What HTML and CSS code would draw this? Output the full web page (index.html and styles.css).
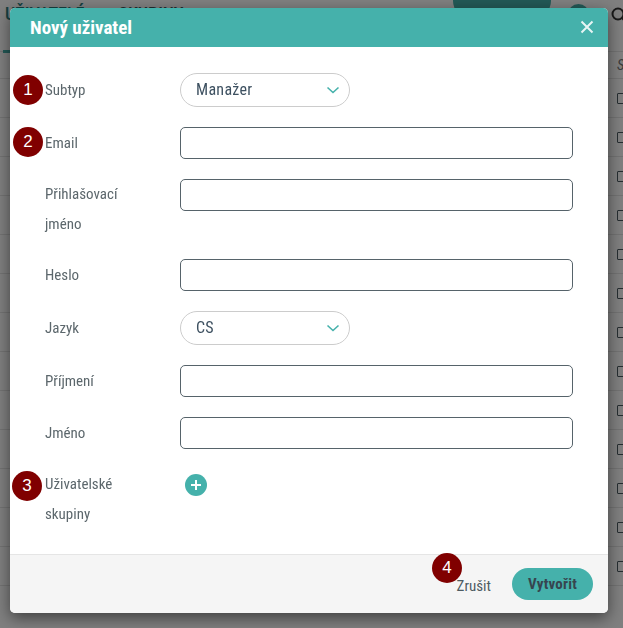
FILE: index.html
```html
<!DOCTYPE html>
<html lang="cs">
<head>
    <meta charset="UTF-8">
    <meta name="viewport" content="width=device-width, initial-scale=1.0">
    <title>Nový uživatel</title>
    <link rel="stylesheet" href="styles.css">
</head>
<body>
    <div class="page">
        <div class="topbar">
            <div class="tabs">
                <span class="tab active">UŽIVATELÉ</span>
                <span class="tab">SKUPINY</span>
            </div>
            <div class="top-actions">
                <span class="top-btn"></span>
                <span class="top-dot"></span>
                <svg class="top-search" width="16" height="16" viewBox="0 0 16 16"><circle cx="7" cy="7" r="5.5" fill="none" stroke="#333" stroke-width="2"/><path d="M11 11l4 4" stroke="#333" stroke-width="2"/></svg>
            </div>
        </div>
        <div class="table-head">S</div>
        <div class="table-row"><span class="check"></span></div>
        <div class="table-row"><span class="check"></span></div>
        <div class="table-row"><span class="check"></span></div>
        <div class="table-row"><span class="check"></span></div>
        <div class="table-row"><span class="check"></span></div>
        <div class="table-row"><span class="check"></span></div>
        <div class="table-row"><span class="check"></span></div>
        <div class="table-row"><span class="check"></span></div>
        <div class="table-row"><span class="check"></span></div>
        <div class="table-row"><span class="check"></span></div>
        <div class="table-row"><span class="check"></span></div>
        <div class="table-row"><span class="check"></span></div>
        <div class="table-row"><span class="check"></span></div>
    </div>

    <div class="backdrop"></div>

    <div class="modal">
        <div class="modal-header">
            <h2>Nový uživatel</h2>
            <svg class="close" width="14" height="14" viewBox="0 0 14 14"><path d="M1.5 1.5l11 11M12.5 1.5l-11 11" stroke="#e6f5f4" stroke-width="2"/></svg>
        </div>
        <div class="modal-body">
            <div class="form-row">
                <span class="badge badge-one">1</span>
                <label>Subtyp</label>
                <div class="select"><span>Manažer</span><svg width="14" height="8" viewBox="0 0 14 8"><path d="M1.5 1.5L7 6.5l5.5-5" fill="none" stroke="#45b1ab" stroke-width="1.6"/></svg></div>
            </div>
            <div class="form-row">
                <span class="badge badge-two">2</span>
                <label>Email</label>
                <input class="text-input" type="text">
            </div>
            <div class="form-row tall">
                <label>Přihlašovací jméno</label>
                <input class="text-input" type="text">
            </div>
            <div class="form-row">
                <label>Heslo</label>
                <input class="text-input" type="text">
            </div>
            <div class="form-row">
                <label>Jazyk</label>
                <div class="select"><span>CS</span><svg width="14" height="8" viewBox="0 0 14 8"><path d="M1.5 1.5L7 6.5l5.5-5" fill="none" stroke="#45b1ab" stroke-width="1.6"/></svg></div>
            </div>
            <div class="form-row">
                <label>Příjmení</label>
                <input class="text-input" type="text">
            </div>
            <div class="form-row">
                <label>Jméno</label>
                <input class="text-input" type="text">
            </div>
            <div class="form-row tall last">
                <span class="badge badge-three">3</span>
                <label>Uživatelské skupiny</label>
                <span class="add-btn"><svg width="12" height="12" viewBox="0 0 12 12"><path d="M6 1v10M1 6h10" stroke="#fff" stroke-width="2"/></svg></span>
            </div>
        </div>
        <div class="modal-footer">
            <span class="badge badge-four">4</span>
            <a class="cancel">Zrušit</a>
            <a class="create">Vytvořit</a>
        </div>
    </div>
</body>
</html>
```

FILE: styles.css
```css
* {
    margin: 0;
    padding: 0;
    box-sizing: border-box;
}
html, body {
    height: 100%;
    overflow: hidden;
}
body {
    font-family: 'Roboto', 'Liberation Sans', sans-serif;
    font-stretch: 75%;
    background-color: #fff;
    color: #4d5b62;
}
.topbar {
    display: flex;
    justify-content: space-between;
    height: 52px;
    border-bottom: 1px solid #e5e5e5;
}
.tabs {
    display: flex;
    gap: 30px;
    padding-left: 12px;
}
.tab {
    font-size: 18px;
    font-weight: 500;
    padding-top: 3px;
    color: #45595f;
}
.tab.active {
    color: #2f7f80;
    border-bottom: 3px solid #45b1ab;
    padding-right: 4px;
    padding-left: 2px;
    margin-left: -9px;
    height: 53px;
}
.top-actions {
    display: flex;
    align-items: flex-start;
}
.top-btn {
    width: 98px;
    height: 34px;
    margin-top: -16px;
    margin-right: 17px;
    border-radius: 17px;
    background-color: #45b1ab;
}
.top-dot {
    width: 21px;
    height: 21px;
    margin-top: 4px;
    margin-right: 22px;
    border-radius: 50%;
    background-color: #45b1ab;
}
.top-search {
    margin-top: 7px;
    margin-right: -4px;
}
.table-head {
    height: 27px;
    padding-left: 617px;
    padding-top: 4px;
    font-size: 15px;
    font-style: italic;
    color: #777;
    border-bottom: 1px solid #e5e5e5;
}
.table-row {
    height: 39px;
    padding-left: 617px;
    padding-top: 14px;
    border-bottom: 1px solid #e5e5e5;
}
.check {
    display: block;
    width: 11px;
    height: 11px;
    border: 1px solid #4d5b62;
    border-radius: 1px;
}
.backdrop {
    position: fixed;
    top: 0;
    left: 0;
    right: 0;
    bottom: 0;
    background-color: rgba(0, 0, 0, 0.5);
}
.modal {
    position: fixed;
    top: 8px;
    left: 10px;
    width: 598px;
    height: 605px;
    display: flex;
    flex-direction: column;
    background-color: #fff;
    border-radius: 5px;
    box-shadow: 0 5px 15px rgba(0, 0, 0, 0.5);
    overflow: hidden;
}
.modal-header {
    flex: 0 0 39px;
    display: flex;
    align-items: center;
    justify-content: space-between;
    padding: 0 14px 0 20px;
    background-color: #45b1ab;
}
.modal-header h2 {
    font-size: 19px;
    font-weight: 700;
    color: #fff;
}
.close {
    margin-top: -1px;
}
.modal-body {
    flex: 1;
    padding: 26px 35px 0 35px;
}
.form-row {
    position: relative;
    display: flex;
    align-items: center;
    margin-bottom: 20px;
}
.form-row.tall {
    align-items: flex-start;
}
.form-row.last {
    margin-bottom: 0;
}
.form-row label {
    flex: 0 0 135px;
    padding-right: 50px;
    font-size: 15px;
    line-height: 30px;
    color: #5c676c;
}
.text-input {
    width: 393px;
    height: 32px;
    border: 1px solid #56636a;
    border-radius: 5px;
    background-color: #fff;
}
.select {
    display: flex;
    align-items: center;
    justify-content: space-between;
    width: 170px;
    height: 34px;
    padding: 0 9px 0 15px;
    border: 1px solid #ccc;
    border-radius: 17px;
    font-size: 16px;
    letter-spacing: 0.3px;
    color: #3d5060;
}
.select span {
    padding-bottom: 2px;
}
.add-btn {
    display: flex;
    align-items: center;
    justify-content: center;
    width: 22px;
    height: 22px;
    margin-left: 5px;
    margin-top: 5px;
    border-radius: 50%;
    background-color: #45b1ab;
}
.badge {
    position: absolute;
    width: 30px;
    height: 30px;
    border-radius: 50%;
    background-color: #800000;
    color: #fff;
    font-family: 'Liberation Sans', sans-serif;
    font-stretch: normal;
    font-size: 17px;
    line-height: 30px;
    text-align: center;
}
.badge-one {
    left: -32px;
    top: 2px;
}
.badge-two {
    left: -32px;
    top: 0;
}
.badge-three {
    left: -33px;
    top: 2px;
}
.badge-four {
    left: 422px;
    top: -2px;
}
.modal-footer {
    position: relative;
    flex: 0 0 59px;
    display: flex;
    align-items: center;
    justify-content: flex-end;
    gap: 21px;
    padding: 0 15px 0 0;
    background-color: #f5f5f5;
    border-top: 1px solid #e5e5e5;
}
.cancel {
    font-size: 15px;
    color: #4d5b62;
    padding-top: 3px;
}
.create {
    width: 81px;
    height: 32px;
    border-radius: 16px;
    background-color: #45b1ab;
    color: #36454f;
    font-size: 15px;
    font-weight: 700;
    letter-spacing: 0.2px;
    line-height: 32px;
    text-align: center;
}
```
